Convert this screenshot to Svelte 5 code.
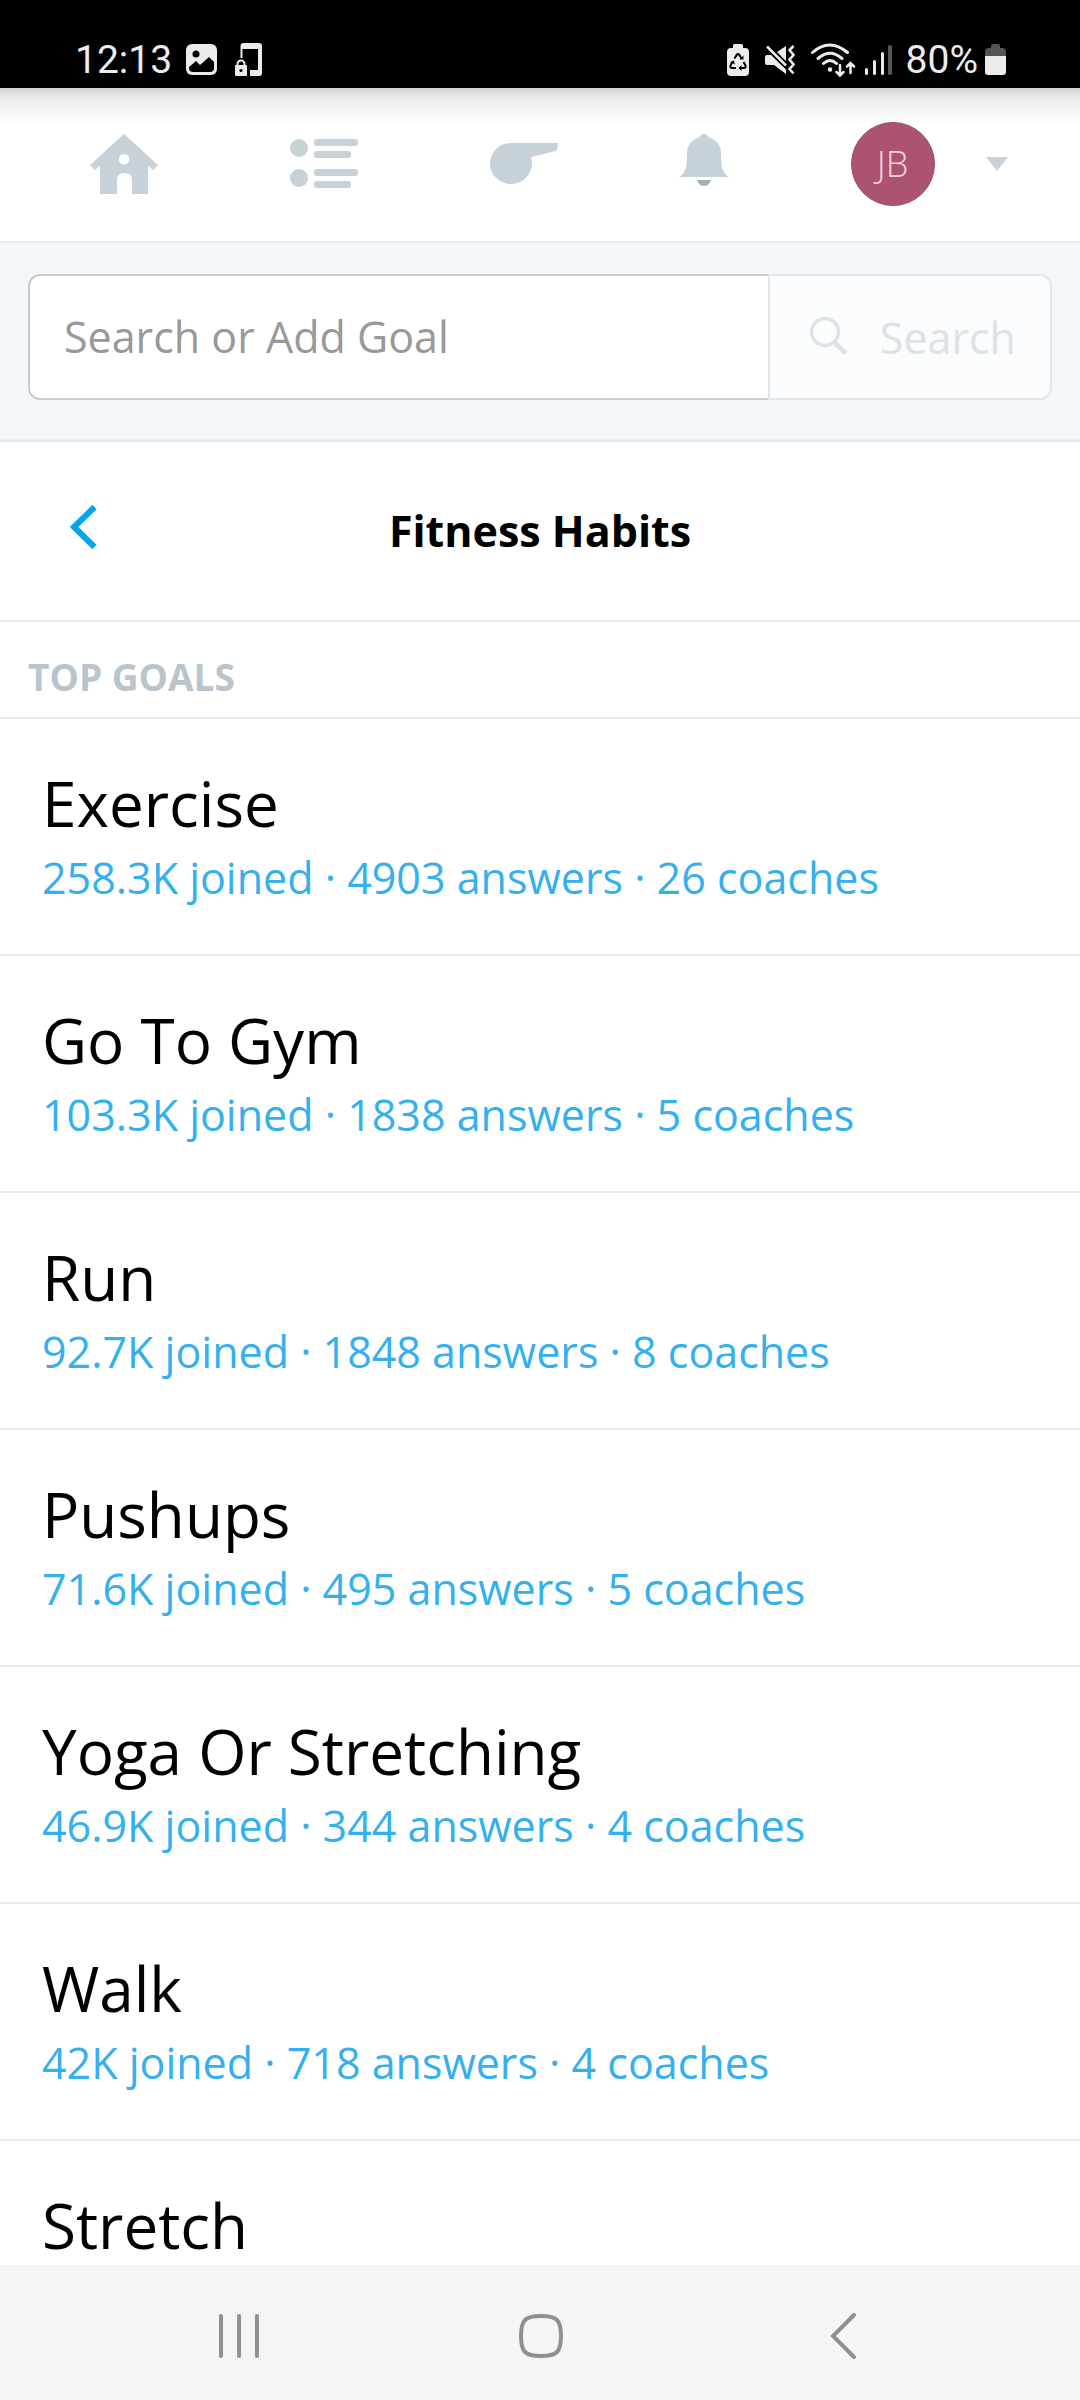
<script lang="ts">
	const goals = [
		{ name: "Exercise", joined: "258.3K", answers: 4903, coaches: 26 },
		{ name: "Go To Gym", joined: "103.3K", answers: 1838, coaches: 5 },
		{ name: "Run", joined: "92.7K", answers: 1848, coaches: 8 },
		{ name: "Pushups", joined: "71.6K", answers: 495, coaches: 5 },
		{ name: "Yoga Or Stretching", joined: "46.9K", answers: 344, coaches: 4 },
		{ name: "Walk", joined: "42K", answers: 718, coaches: 4 },
		{ name: "Stretch", joined: "", answers: 0, coaches: 0 },
	];
	let query = "";
</script>

<div class="screen">
	<div class="status">
		<div class="left">
			<span class="time">12:13</span>
			<svg width="31" height="32" viewBox="0 0 31 32">
				<rect width="31" height="31" rx="6" fill="#ececec" />
				<circle cx="10" cy="10" r="3.5" fill="#000" />
				<path d="M3 23l7-6 4 4 9-8 5 5v6q0 4-4 4H7q-4 0-4-4z" fill="#000" />
			</svg>
			<svg class="locked" width="27" height="34" viewBox="0 0 27 34">
				<path d="M6.5 15V3q0-2 2-2H24q2 0 2 2v27q0 2-2 2h-9" fill="none" stroke="#ececec" stroke-width="2" />
				<path d="M6 1h20v5H6zM23 2h3v28h-3zM15 27h10v6H15z" fill="#ececec" />
				<rect y="22" width="12" height="11" rx="1" fill="#ececec" />
				<path d="M0 14h4v6H0zM2 18h8v4H2z" fill="#000" />
				<path d="M2.5 23v-2a3.5 3.5 0 0 1 7 0v2" fill="none" stroke="#ececec" stroke-width="2" />
				<circle cx="6" cy="27.5" r="1.6" fill="#000" />
			</svg>
		</div>
		<div class="right">
			<svg class="saver" width="22" height="33" viewBox="0 0 22 33">
				<path d="M6 4V1.5Q6 0 7.5 0h7Q16 0 16 1.5V4h2q4 0 4 4v20q0 4-4 4H4q-4 0-4-4V8q0-4 4-4z" fill="#ececec" />
				<path d="M7.5 14.5l2.2-3.6q1.3-2 2.6 0l2.2 3.6M16.500 18l2 3.5q.8 2.5-2 2.5H13M9 24H5.5q-2.800 0-2-2.5l2-3.5" fill="none" stroke="#000" stroke-width="2" />
				<path d="M12.5 15.5h4v-4zM14.5 21v6l-3-3zM3 18l4-1.5.8 4z" fill="#000" />
			</svg>
			<svg class="mute" width="30" height="30" viewBox="0 0 30 30">
				<path d="M0 12q0-2 2-2h4l15 14.5V29L9 20H2q-2 0-2-2zM12 7l9-6v15z" fill="#ececec" />
				<path d="M2 1.5l19 19" stroke="#ececec" stroke-width="2.5" />
				<path d="M28.5 1l-4 4 4 5-4 4.500 4 5-4 4.500 4 4.500" fill="none" stroke="#ececec" stroke-width="2.5" />
			</svg>
			<svg class="wifi" width="45" height="35" viewBox="0 0 45 35" fill="none" stroke="#ececec" stroke-width="3" stroke-linecap="round">
				<path d="M1.5 9.500q17-15 35 0M7 15.5q12-10.500 24 0M12.5 20.5q6.500-6 13 0" />
				<circle cx="19" cy="26.5" r="2.2" fill="#ececec" stroke="none" />
				<path d="M29 22v10M25.5 29l3.500 3.500 3.500-3.500M39.500 30V20M36 23.500l3.500-3.500 3.500 3.500" stroke-width="2.5" />
			</svg>
			<svg class="signal" width="27" height="31" viewBox="0 0 27 31">
				<rect y="23" width="3" height="7" rx="1.5" fill="#ececec" />
				<rect x="8" y="15" width="3" height="15" rx="1.5" fill="#ececec" />
				<rect x="16" y="7" width="3" height="23" rx="1.5" fill="#ececec" />
				<rect x="23" y="0" width="4" height="30" rx="1.5" fill="#555" />
			</svg>
			<span class="charge">80%</span>
			<svg width="21" height="33" viewBox="0 0 21 33">
				<path d="M6 4V2q0-2 2-2h5q2 0 2 2v2h2q4 0 4 4v4H0V8q0-4 4-4z" fill="#555" />
				<path d="M0 12h21v16q0 3-3 3H3q-3 0-3-3z" fill="#ececec" />
			</svg>
		</div>
	</div>

	<nav class="tabs">
		<a href="#home" aria-label="Home">
			<svg width="68" height="60" viewBox="0 0 68 60">
				<path fill-rule="evenodd" d="M34 0l34 31-5 5-5-4v28H42V46q0-7-7.500-7T27 46v14H10V32l-5 4-5-5zM34 20a5.3 5.3 0 1 0 .1 0z" />
			</svg>
		</a>
		<a href="#plan" aria-label="Plan">
			<svg width="68" height="50" viewBox="0 0 68 50">
				<circle cx="9" cy="9" r="9" />
				<circle cx="9" cy="39" r="9" />
				<rect x="24" y="0" width="44" height="7" rx="3" />
				<rect x="24" y="12" width="37" height="7" rx="3" />
				<rect x="24" y="30" width="44" height="7" rx="3" />
				<rect x="24" y="42" width="37" height="7" rx="3" />
			</svg>
		</a>
		<a href="#coach" aria-label="Coaching">
			<svg width="68" height="42" viewBox="0 0 68 42">
				<path d="M21 0h47q0 5-2 8L41 14q1 3 1 7A21 20.5 0 1 1 21 0z" />
			</svg>
		</a>
		<a class="alerts" href="#alerts" aria-label="Notifications">
			<svg width="50" height="52" viewBox="0 0 50 52">
				<path d="M21 3q0-3 4-3t4 3q13 4 13 17 0 13 2 16 2 5 6 7H0q4-2 6-7 2-4 2-16Q8 7 21 3z" />
				<path d="M18 46h14q-2 6-7 6t-7-6z" fill="#a3b0b5" />
			</svg>
		</a>
		<button class="account" aria-label="Account menu">
			<span class="avatar">JB</span>
			<svg width="22" height="14" viewBox="0 0 22 14"><path d="M0 0h22L11 14z" /></svg>
		</button>
	</nav>

	<form class="search" on:submit|preventDefault>
		<input type="text" placeholder="Search or Add Goal" aria-label="Search or Add Goal" bind:value={query} />
		<button disabled={!query}>
			<svg width="38" height="40" viewBox="0 0 38 40" fill="none" stroke="currentColor">
				<circle cx="15" cy="15" r="13.5" stroke-width="3.5" />
				<path d="M25 26l11 10.5" stroke-width="4.5" />
			</svg>
			Search
		</button>
	</form>

	<header class="heading">
		<a class="back" href="#topics" aria-label="Back">
			<svg width="28" height="46" viewBox="0 0 28 46">
				<path d="M24.5 3L4 23l20.5 20" fill="none" stroke="#03a5f0" stroke-width="6" />
			</svg>
		</a>
		<h1>Fitness Habits</h1>
	</header>

	<main>
		<h2>TOP GOALS</h2>
		<ul>
			{#each goals as goal}
				<li>
					<a href="#goal">
						<span class="name">{goal.name}</span>
						{#if goal.joined}
							<span class="stats">
								{goal.joined} joined · {goal.answers} answers · {goal.coaches} coaches
							</span>
						{/if}
					</a>
				</li>
			{/each}
		</ul>
	</main>

	<div class="system">
		<button aria-label="Recent apps">
			<svg width="40" height="44" viewBox="0 0 40 44">
				<path d="M2 2v40M20 2v40M38 2v40" />
			</svg>
		</button>
		<button aria-label="Home screen">
			<svg width="44" height="44" viewBox="0 0 44 44">
				<path d="M22 2Q34 2 38 6t4 16-4 16-16 4-16-4-4-16T6 6 22 2z" />
			</svg>
		</button>
		<button aria-label="Go back">
			<svg width="26" height="46" viewBox="0 0 26 46">
				<path d="M24 2L3 23l21 21" />
			</svg>
		</button>
	</div>
</div>

<style>
	:global(body) {
		margin: 0;
		background: #fff;
	}
	.screen {
		min-height: 100vh;
		display: flex;
		flex-direction: column;
		font-family: "Open Sans", sans-serif;
		color: #000;
	}
	svg {
		display: block;
		flex-shrink: 0;
	}
	a {
		color: inherit;
		text-decoration: none;
	}
	button {
		font: inherit;
		padding: 0;
		border: 0;
		background: none;
	}

	.status {
		display: flex;
		justify-content: space-between;
		padding: 35px 74px 3px 75px;
		background: #000;
		color: #ececec;
		font-family: Roboto, sans-serif;
		font-size: 39px;
		line-height: 50px;
	}
	.left,
	.right {
		display: flex;
		align-items: center;
	}
	.time {
		margin-right: 14px;
	}
	.locked {
		margin-left: 18px;
	}
	.saver,
	.mute {
		margin-right: 16px;
	}
	.wifi {
		margin-right: 9px;
	}
	.signal {
		margin-right: 14px;
	}
	.charge {
		margin-right: 7px;
	}

	.tabs {
		box-sizing: border-box;
		display: grid;
		grid-template-columns: 20fr 20fr 20fr 16fr 29fr;
		align-items: center;
		justify-items: center;
		height: 155px;
		padding: 0 6px 2px 24px;
		border-bottom: 2px solid #e8edf0;
		background: linear-gradient(#d2d2d2, #e6e6e6 8px, #f4f4f4 20px, #fff 38px);
		fill: #c6d1d8;
	}
	.alerts {
		padding-bottom: 8px;
	}
	.account {
		display: flex;
		align-items: center;
		gap: 51px;
	}
	.avatar {
		box-sizing: border-box;
		width: 84px;
		height: 84px;
		border: 1px solid #93506b;
		border-radius: 50%;
		background: #ac5372;
		color: #f7cfe0;
		font-size: 36px;
		font-weight: 300;
		line-height: 82px;
		text-align: center;
	}

	.search {
		display: flex;
		padding: 31px 28px 42px;
		background: linear-gradient(#0000 calc(100% - 4px), #dcdfe2) #f3f7fa;
		font-size: 43px;
	}
	.search input {
		flex: 1;
		min-width: 0;
		height: 126px;
		box-sizing: border-box;
		padding: 0 34px 2px;
		border: 2px solid #ccc;
		border-right: 0;
		border-radius: 12px 0 0 12px;
		background: #fff;
		font: inherit;
	}
	.search input::placeholder {
		color: #999;
		opacity: 1;
	}
	.search button {
		display: flex;
		align-items: center;
		gap: 32px;
		padding: 0 34px 0 40px;
		border: 2px solid #e3e6e8;
		border-radius: 0 12px 12px 0;
		background: #fafcfe;
		color: #dde2e5;
	}

	.heading {
		display: grid;
		grid-template-columns: 140px 1fr 140px;
		align-items: center;
		height: 178px;
		border-bottom: 2px solid #ebebeb;
	}
	.back {
		justify-self: center;
		padding: 0 0 8px 28px;
	}
	h1 {
		margin: 0;
		font-size: 43px;
		line-height: 60px;
		text-align: center;
	}

	main {
		flex: 1;
	}
	h2 {
		margin: 0;
		padding: 30px 28px 15px;
		border-bottom: 2px solid #ebebeb;
		color: #b9c4cd;
		font-size: 37px;
		line-height: 50px;
	}
	ul {
		margin: 0;
		padding: 0;
		list-style: none;
	}
	li a {
		display: flex;
		flex-direction: column;
		gap: 9px;
		padding: 48px 42px 46px;
		border-bottom: 2px solid #ebebeb;
	}
	li:last-child a {
		padding-bottom: 0;
		border: 0;
	}
	.name {
		font-size: 62px;
		line-height: 72px;
	}
	.stats {
		color: #35b0ee;
		font-size: 43px;
		line-height: 60px;
	}

	.system {
		box-sizing: border-box;
		display: grid;
		grid-template-columns: repeat(3, 1fr);
		place-items: center;
		height: 135px;
		padding: 6px 86px 0 88px;
		background: #f5f5f5;
	}
	.system path {
		fill: none;
		stroke: #909090;
		stroke-width: 4;
		stroke-linecap: round;
	}
</style>
